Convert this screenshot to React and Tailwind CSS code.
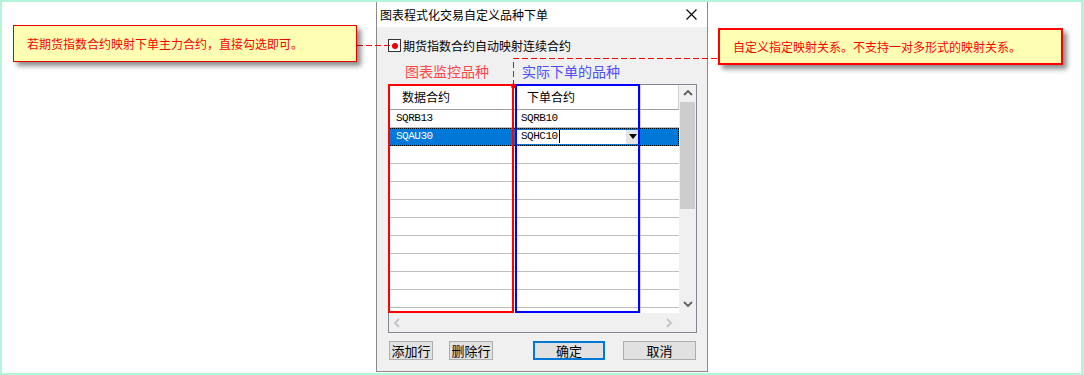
import React from "react";

const cjk = { fontFamily: '"Noto Sans CJK SC", "Noto Sans", sans-serif' };
const mono = { fontFamily: '"Liberation Mono", monospace' };

function Chevron({ dir, color }) {
  const d = {
    up: "M1 6 L5 2 L9 6",
    down: "M1 2 L5 6 L9 2",
    left: "M6 1 L2 5 L6 9",
    right: "M2 1 L6 5 L2 9",
  }[dir];
  return (
    <svg width="10" height="10" viewBox="0 0 10 10">
      <path d={d} fill="none" stroke={color} strokeWidth="1.8" />
    </svg>
  );
}

function Row({ a, b, selected }) {
  if (selected) {
    return (
      <div className="flex h-[18px] bg-[#0078d7] border border-dotted border-black">
        <div className="w-[124px] pl-[6px] flex items-center text-white text-[11px] tracking-[-0.5px]" style={mono}>
          {a}
        </div>
        <div className="w-[127px] flex items-stretch py-[1px] pl-[1px] pr-[1px]">
          <div className="flex-1 bg-white flex items-center pl-[6px] text-[11px] tracking-[-0.5px] text-black" style={mono}>
            {b}
            <span className="w-[1px] h-[13px] bg-black ml-[1px]" />
          </div>
          <div className="w-[14px] bg-[#e5e5e5] flex items-center justify-center">
            <svg width="8" height="5" viewBox="0 0 8 5">
              <path d="M0 0 L8 0 L4 5 Z" fill="#000" />
            </svg>
          </div>
        </div>
        <div className="flex-1" />
      </div>
    );
  }
  return (
    <div className="flex h-[18px] border-b border-[#bdbdbd]">
      <div className="w-[124px] pl-[7px] flex items-center text-black text-[11px] tracking-[-0.5px]" style={mono}>
        {a}
      </div>
      <div className="w-[127px] pl-[7px] flex items-center border-l border-[#d4d4d4] text-black text-[11px] tracking-[-0.5px]" style={mono}>
        {b}
      </div>
      <div className="flex-1 border-l border-[#d4d4d4]" />
    </div>
  );
}

function Button({ children, width, primary }) {
  return (
    <button
      className={`h-[19px] ${width} bg-[#e1e1e1] text-[13px] leading-none text-black flex items-center justify-center ${
        primary ? "border-2 border-[#0078d7]" : "border border-[#adadad]"
      }`}
      style={cjk}
    >
      {children}
    </button>
  );
}

export default function App() {
  const empty = Array.from({ length: 10 });

  return (
    <div className="relative w-[1084px] h-[375px] bg-white border-2 border-r-[3px] border-[#b3f5da] overflow-hidden" style={cjk}>
      <div className="ml-[374px] w-[332px] h-[370px] flex flex-col border-l border-r border-b border-[#8a8a8a] bg-[#f0f0f0]">
        <div className="h-[25px] bg-white flex items-center justify-between pl-[3px] pr-[10px]">
          <span className="text-[12px] text-black">图表程式化交易自定义品种下单</span>
          <svg width="11" height="11" viewBox="0 0 11 11">
            <path d="M0.5 0.5 L10.5 10.5 M10.5 0.5 L0.5 10.5" stroke="#000" strokeWidth="1.1" />
          </svg>
        </div>

        <div className="flex-1 flex flex-col pl-[11px]">
          <div className="mt-[12px] flex items-center h-[13px]">
            <div className="w-[13px] h-[13px] border border-[#333] bg-white flex items-center justify-center">
              <span className="w-[6px] h-[6px] rounded-full bg-[#ee0000]" />
            </div>
            <span className="ml-[2px] text-[12px] text-black">期货指数合约自动映射连续合约</span>
          </div>

          <div className="mt-[9px] h-[20px] flex items-center">
            <span className="ml-[17px] text-[14px] text-[#ff4646]">图表监控品种</span>
            <span className="ml-[33px] text-[14px] text-[#4e4eff]">实际下单的品种</span>
          </div>

          <div className="relative mt-[3px] w-[309px] h-[249px] border border-[#828790] bg-white flex flex-col">
            <div className="flex h-[228px]">
              <div className="w-[290px] flex flex-col overflow-hidden">
                <div className="flex h-[25px] border-b border-[#a0a0a0] shrink-0">
                  <div className="w-[124px] pl-[13px] flex items-center text-[12px] text-black">数据合约</div>
                  <div className="w-[127px] pl-[13px] flex items-center border-l border-[#d4d4d4] text-[12px] text-black">下单合约</div>
                  <div className="flex-1 border-l border-[#d4d4d4] border-r" />
                </div>
                <Row a="SQRB13" b="SQRB10" />
                <Row a="SQAU30" b="SQHC10" selected />
                {empty.map((_, i) => (
                  <div key={i} className="flex h-[18px] border-b border-[#bdbdbd] shrink-0">
                    <div className="w-[124px]" />
                    <div className="w-[127px] border-l border-[#d4d4d4]" />
                    <div className="flex-1 border-l border-[#d4d4d4]" />
                  </div>
                ))}
              </div>
              <div className="w-[17px] bg-[#f0f0f0] flex flex-col items-center">
                <div className="h-[17px] flex items-center justify-center">
                  <Chevron dir="up" color="#606060" />
                </div>
                <div className="w-[15px] h-[107px] bg-[#cdcdcd]" />
                <div className="flex-1" />
                <div className="h-[17px] flex items-center justify-center">
                  <Chevron dir="down" color="#606060" />
                </div>
              </div>
            </div>
            <div className="flex-1 flex bg-[#f0f0f0]">
              <div className="w-[290px] flex items-center justify-between px-[4px]">
                <Chevron dir="left" color="#c4c4c4" />
                <Chevron dir="right" color="#c4c4c4" />
              </div>
              <div className="flex-1" />
            </div>

            <div className="absolute left-[-1px] top-[-1px] w-[126px] h-[229px] border-2 border-[#ff0000]" />
            <div className="absolute left-[126px] top-[-1px] w-[125px] h-[229px] border-2 border-[#0000ff]" />
          </div>

          <div className="mt-[8px] flex items-center">
            <div className="ml-[1px]">
              <Button width="w-[44px]">添加行</Button>
            </div>
            <div className="ml-[16px]">
              <Button width="w-[44px]">删除行</Button>
            </div>
            <div className="ml-[40px]">
              <Button width="w-[72px]" primary>确定</Button>
            </div>
            <div className="ml-[18px]">
              <Button width="w-[73px]">取消</Button>
            </div>
          </div>
        </div>
      </div>

      <svg className="absolute left-[-2px] top-[-2px] pointer-events-none" width="1084" height="375">
        <path d="M357 45.5 L392 45.5" stroke="#ff0000" strokeWidth="1" strokeDasharray="6 3" fill="none" />
        <path d="M717 58.5 L513.5 58.5 L513.5 85" stroke="#ff0000" strokeWidth="1" strokeDasharray="6 3" fill="none" />
        <circle cx="513.5" cy="86" r="2.5" fill="#ff0000" />
      </svg>

      <div className="absolute left-[11px] top-[23px] w-[344px] h-[37px] bg-[#ffffb4] border border-[#e00000] shadow-[4px_4px_5px_rgba(0,0,0,0.45)] flex items-center pl-[13px]">
        <span className="text-[12px] text-[#ff0000]">若期货指数合约映射下单主力合约，直接勾选即可。</span>
      </div>
      <div className="absolute left-[716px] top-[26px] w-[345px] h-[37px] bg-[#ffffb4] border-2 border-[#ff0000] shadow-[4px_4px_5px_rgba(0,0,0,0.45)] flex items-center pl-[13px]">
        <span className="text-[12px] text-[#ff0000]">自定义指定映射关系。不支持一对多形式的映射关系。</span>
      </div>
    </div>
  );
}
